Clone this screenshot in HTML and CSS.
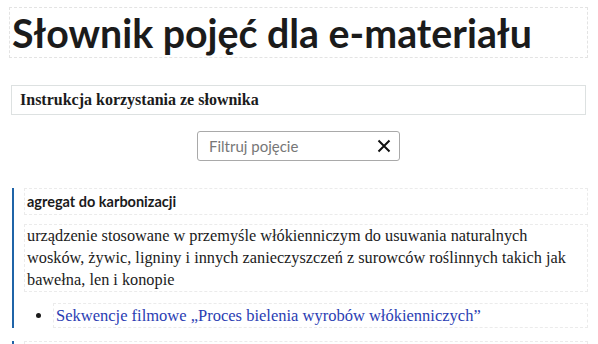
FILE: index.html
```html
<!DOCTYPE html>
<html lang="pl">
<head>
  <meta charset="UTF-8" />
  <meta name="viewport" content="width=device-width, initial-scale=1.0" />
  <title>Słownik pojęć dla e-materiału</title>
  <link rel="stylesheet" href="styles.css">
</head>
<body>
  <div class="container">
    <h1 class="title">Słownik pojęć dla e-materiału</h1>

    <div class="instruction">Instrukcja korzystania ze słownika</div>

    <div class="filter">
      <input type="text" placeholder="Filtruj pojęcie" />
      <span class="clear">
        <svg width="14" height="14" viewBox="0 0 14 14"><path d="M1.5 1.5 L12.5 12.5 M12.5 1.5 L1.5 12.5" stroke="#111" stroke-width="2" fill="none"/></svg>
      </span>
    </div>

    <div class="entry">
      <div class="term">agregat do karbonizacji</div>
      <div class="definition">urządzenie stosowane w przemyśle włókienniczym do usuwania naturalnych wosków, żywic, ligniny i innych zanieczyszczeń z surowców roślinnych takich jak bawełna, len i konopie</div>
      <ul class="links">
        <li><a href="#">Sekwencje filmowe „Proces bielenia wyrobów włókienniczych”</a></li>
      </ul>
    </div>

    <div class="entry">
      <div class="term term-empty"></div>
    </div>
  </div>
</body>
</html>
```

FILE: styles.css
```css
body {
  margin: 0;
  padding: 0;
  background: #fff;
  color: #1b1b1b;
  font-family: "Liberation Serif", serif;
}
.container {
  padding: 7px 10px 0 9px;
}
.title {
  margin: 0;
  padding: 6px 2px 5px;
  border: 1px dashed #e3e3e3;
  font-family: Lato, sans-serif;
  font-size: 39.3px;
  font-weight: 700;
  line-height: 38px;
  color: #1b1b1b;
}
.instruction {
  margin: 27px 2px 0 2px;
  padding: 5px 8px 6px;
  border: 1px solid #dde1e1;
  font-size: 16px;
  font-weight: 700;
  line-height: 17px;
}
.filter {
  position: relative;
  width: 203px;
  margin: 16px auto 0;
}
.filter input {
  display: block;
  box-sizing: border-box;
  width: 100%;
  height: 30px;
  padding: 0 30px 0 11px;
  border: 1px solid #a9a9a9;
  border-radius: 3px;
  font-family: Lato, sans-serif;
  font-size: 15px;
  color: #333;
  outline: none;
}
.filter input::placeholder {
  color: #777;
}
.clear {
  position: absolute;
  right: 9px;
  top: 8px;
  width: 14px;
  height: 14px;
}
.clear svg {
  display: block;
}
.entry {
  margin: 28px 0 0 3px;
  padding: 0 0 0 10px;
  border-left: 2px solid #1f64a8;
}
.entry + .entry {
  margin-top: 14px;
}
.term {
  margin-top: -1px;
  padding: 5px 2px 4px;
  border: 1px dashed #ebebeb;
  font-family: Lato, sans-serif;
  font-size: 14.5px;
  font-weight: 700;
  line-height: 16px;
}
.term-empty {
  height: 16px;
}
.definition {
  margin-top: 9px;
  padding: 0 2px;
  border: 1px dashed #ebebeb;
  font-size: 16.3px;
  line-height: 22px;
}
.links {
  margin: 11px 0 0;
  padding-left: 29px;
}
.links li {
  padding: 2px 2px 1px;
  border: 1px dashed #ebebeb;
  font-size: 16.5px;
  line-height: 20px;
}
.links a {
  color: #2a3db3;
  text-decoration: none;
}
```
